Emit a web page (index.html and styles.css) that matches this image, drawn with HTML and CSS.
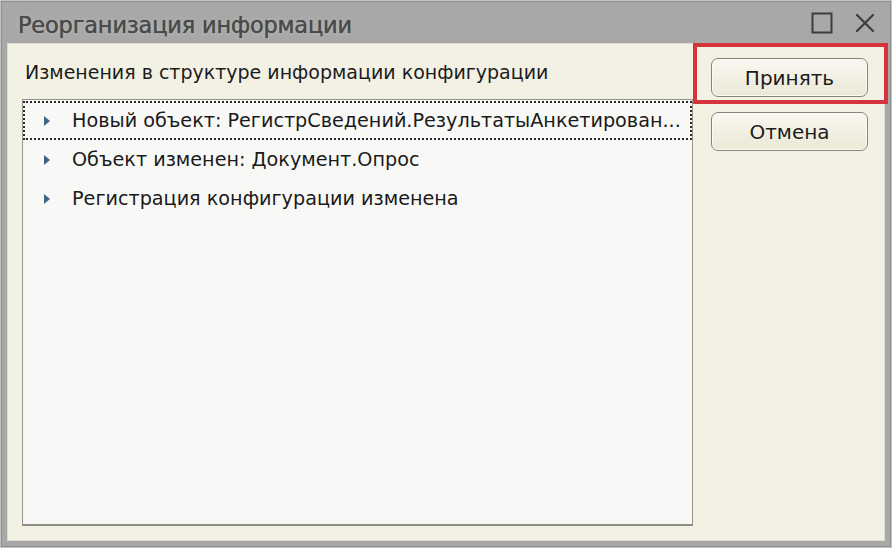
FILE: index.html
```html
<!DOCTYPE html>
<html lang="ru">
<head>
<meta charset="utf-8">
<title>Реорганизация информации</title>
<link rel="stylesheet" href="styles.css">
</head>
<body>
<div class="window">
  <div class="titlebar">
    <span class="title">Реорганизация информации</span>
    <div class="controls">
      <svg class="ctl" width="22" height="22" viewBox="0 0 22 22"><rect x="1.5" y="1.5" width="19" height="19" fill="none" stroke="#3c3c3c" stroke-width="2"/></svg>
      <svg class="ctl" width="20" height="20" viewBox="0 0 20 20"><path d="M2 2 L18 18 M18 2 L2 18" stroke="#3c3c3c" stroke-width="2.2" stroke-linecap="round"/></svg>
    </div>
  </div>
  <div class="content">
    <div class="main">
      <div class="label">Изменения в структуре информации конфигурации</div>
      <div class="list">
        <div class="row focused"><span class="arrow"></span><span class="text">Новый объект: РегистрСведений.РезультатыАнкетирован...</span></div>
        <div class="row"><span class="arrow"></span><span class="text">Объект изменен: Документ.Опрос</span></div>
        <div class="row"><span class="arrow"></span><span class="text">Регистрация конфигурации изменена</span></div>
      </div>
    </div>
    <div class="side">
      <button class="btn">Принять</button>
      <button class="btn">Отмена</button>
      <div class="highlight"></div>
    </div>
  </div>
</div>
</body>
</html>
```

FILE: styles.css
```css
* { box-sizing: border-box; }
html, body { margin: 0; padding: 0; }
body {
  width: 892px;
  height: 548px;
  background: #9c9c9c;
  font-family: "DejaVu Sans", Tahoma, sans-serif;
  overflow: hidden;
}
.window {
  width: 892px;
  height: 548px;
  background: #a8a8a8;
  border: 1px solid #c4c4c4;
  box-shadow: inset 1px 1px 0 #8e8e8e, inset -1px -1px 0 #8e8e8e;
  padding: 0 6px 6px 6px;
  display: flex;
  flex-direction: column;
}
.titlebar {
  height: 42px;
  display: flex;
  align-items: center;
  justify-content: space-between;
  padding: 0 10px 0 11px;
}
.title {
  font-size: 22.5px;
  color: #4a4a4a;
  text-shadow: 0 0 1px #4a4a4a, 0 0 3px #cfcfcf;
  margin-top: 6px;
  letter-spacing: -0.2px;
}
.controls {
  display: flex;
  align-items: center;
  gap: 22px;
  margin-top: 2px;
}
.content {
  flex: 1;
  background: #f3f1e3;
  border: 1px solid #dcdcd4;
  display: flex;
  padding: 14px 16px 14px 14px;
  gap: 18px;
}
.main {
  flex: 1;
  display: flex;
  flex-direction: column;
}
.label {
  font-size: 19px;
  color: #1c1c1c;
  padding: 3px 0 0 3px;
  height: 41px;
}
.list {
  flex: 1;
  background: #f8f8f6;
  border: 1px solid #96968a;
  border-bottom: 2px solid #8c8c82;
  padding: 1px 0 0 0;
}
.row {
  height: 39px;
  display: flex;
  align-items: center;
  font-size: 19.2px;
  color: #1a1a1a;
  padding-left: 21px;
  white-space: nowrap;
}
.row.focused {
  border: 2px dotted #2a2a2a;
  padding-left: 19px;
}
.arrow {
  flex: none;
  width: 0;
  height: 0;
  border-top: 5px solid transparent;
  border-bottom: 5px solid transparent;
  border-left: 6px solid #3f6585;
  margin-right: 22px;
}
.side {
  width: 157px;
  display: flex;
  flex-direction: column;
  gap: 15px;
  position: relative;
}
.btn {
  height: 39px;
  width: 157px;
  border: 1px solid #85857a;
  border-radius: 7px;
  background: linear-gradient(#f9f8f1, #ebe8d6);
  box-shadow: inset 0 0 0 1px #fbfaf3;
  font-family: "DejaVu Sans", Tahoma, sans-serif;
  font-size: 20px;
  color: #1c1c1c;
  padding: 0;
}
.highlight {
  position: absolute;
  left: -18px;
  top: -15px;
  width: 195px;
  height: 61px;
  border: 4px solid #d6343c;
}
```
